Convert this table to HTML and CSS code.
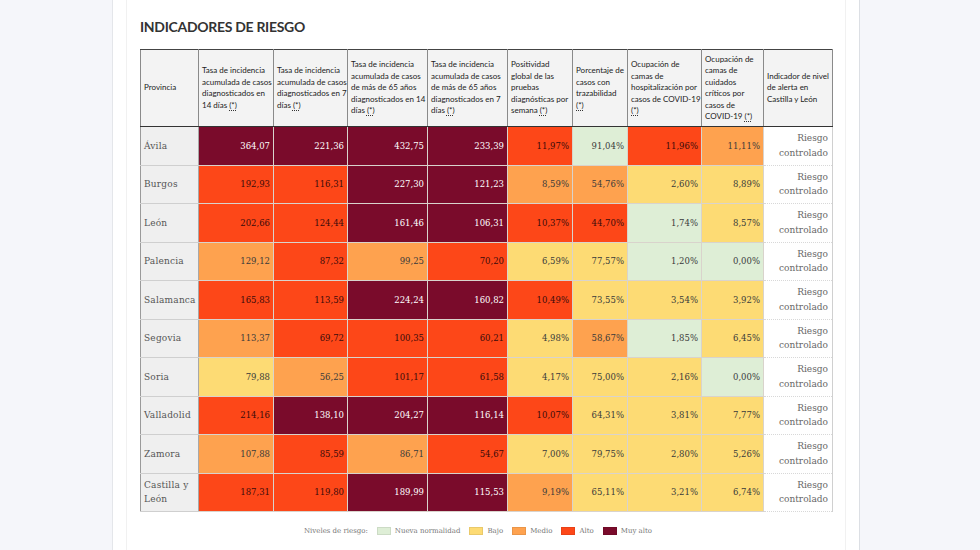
FILE: index.html
```html
<!DOCTYPE html>
<html lang="es">
<head>
<meta charset="utf-8">
<title>Indicadores de riesgo</title>
<link rel="stylesheet" href="styles.css">
</head>
<body>
<div class="page">
  <div class="inner">
    <h2 class="title">INDICADORES DE RIESGO</h2>
    <table class="risk">
      <thead>
        <tr>
          <th class="c1">Provincia</th>
          <th class="c2">Tasa de incidencia<br>acumulada de casos<br>diagnosticados en<br>14 días <abbr>(*)</abbr></th>
          <th class="c3">Tasa de incidencia<br>acumulada de casos<br>diagnosticados en 7<br>días <abbr>(*)</abbr></th>
          <th class="c4">Tasa de incidencia<br>acumulada de casos<br>de más de 65 años<br>diagnosticados en 14<br>días <abbr>(*)</abbr></th>
          <th class="c5">Tasa de incidencia<br>acumulada de casos<br>de más de 65 años<br>diagnosticados en 7<br>días <abbr>(*)</abbr></th>
          <th class="c6">Positividad<br>global de las<br>pruebas<br>diagnósticas por<br>semana <abbr>(*)</abbr></th>
          <th class="c7">Porcentaje de<br>casos con<br>trazabilidad<br><abbr>(*)</abbr></th>
          <th class="c8">Ocupación de<br>camas de<br>hospitalización por<br>casos de COVID-19<br><abbr>(*)</abbr></th>
          <th class="c9">Ocupación de<br>camas de<br>cuidados<br>críticos por<br>casos de<br>COVID-19 <abbr>(*)</abbr></th>
          <th class="c10">Indicador de nivel<br>de alerta en<br>Castilla y León</th>
        </tr>
      </thead>
      <tbody>
        <tr><td class="prov">Ávila</td><td class="m">364,07</td><td class="m">221,36</td><td class="m">432,75</td><td class="m">233,39</td><td class="a">11,97%</td><td class="n">91,04%</td><td class="a">11,96%</td><td class="me">11,11%</td><td class="lvl">Riesgo<br>controlado</td></tr>
        <tr><td class="prov">Burgos</td><td class="a">192,93</td><td class="a">116,31</td><td class="m">227,30</td><td class="m">121,23</td><td class="me">8,59%</td><td class="me">54,76%</td><td class="b">2,60%</td><td class="b">8,89%</td><td class="lvl">Riesgo<br>controlado</td></tr>
        <tr><td class="prov">León</td><td class="a">202,66</td><td class="a">124,44</td><td class="m">161,46</td><td class="m">106,31</td><td class="a">10,37%</td><td class="a">44,70%</td><td class="n">1,74%</td><td class="b">8,57%</td><td class="lvl">Riesgo<br>controlado</td></tr>
        <tr><td class="prov">Palencia</td><td class="me">129,12</td><td class="a">87,32</td><td class="me">99,25</td><td class="a">70,20</td><td class="b">6,59%</td><td class="b">77,57%</td><td class="n">1,20%</td><td class="n">0,00%</td><td class="lvl">Riesgo<br>controlado</td></tr>
        <tr><td class="prov">Salamanca</td><td class="a">165,83</td><td class="a">113,59</td><td class="m">224,24</td><td class="m">160,82</td><td class="a">10,49%</td><td class="b">73,55%</td><td class="b">3,54%</td><td class="b">3,92%</td><td class="lvl">Riesgo<br>controlado</td></tr>
        <tr><td class="prov">Segovia</td><td class="me">113,37</td><td class="a">69,72</td><td class="a">100,35</td><td class="a">60,21</td><td class="b">4,98%</td><td class="me">58,67%</td><td class="n">1,85%</td><td class="b">6,45%</td><td class="lvl">Riesgo<br>controlado</td></tr>
        <tr><td class="prov">Soria</td><td class="b">79,88</td><td class="me">56,25</td><td class="a">101,17</td><td class="a">61,58</td><td class="b">4,17%</td><td class="b">75,00%</td><td class="b">2,16%</td><td class="n">0,00%</td><td class="lvl">Riesgo<br>controlado</td></tr>
        <tr><td class="prov">Valladolid</td><td class="a">214,16</td><td class="m">138,10</td><td class="m">204,27</td><td class="m">116,14</td><td class="a">10,07%</td><td class="b">64,31%</td><td class="b">3,81%</td><td class="b">7,77%</td><td class="lvl">Riesgo<br>controlado</td></tr>
        <tr><td class="prov">Zamora</td><td class="me">107,88</td><td class="a">85,59</td><td class="me">86,71</td><td class="a">54,67</td><td class="b">7,00%</td><td class="b">79,75%</td><td class="b">2,80%</td><td class="b">5,26%</td><td class="lvl">Riesgo<br>controlado</td></tr>
        <tr><td class="prov">Castilla y<br>León</td><td class="a">187,31</td><td class="a">119,80</td><td class="m">189,99</td><td class="m">115,53</td><td class="me">9,19%</td><td class="b">65,11%</td><td class="b">3,21%</td><td class="b">6,74%</td><td class="lvl">Riesgo<br>controlado</td></tr>
      </tbody>
    </table>
    <div class="legend">
      <span class="legend-label">Niveles de riesgo:</span>
      <span class="item"><i class="sw n"></i>Nueva normalidad</span>
      <span class="item"><i class="sw b"></i>Bajo</span>
      <span class="item"><i class="sw me"></i>Medio</span>
      <span class="item"><i class="sw a"></i>Alto</span>
      <span class="item"><i class="sw m"></i>Muy alto</span>
    </div>
  </div>
</div>
</body>
</html>
```

FILE: styles.css
```css
html, body {
  margin: 0;
  padding: 0;
}
body {
  background: #f5f6fa;
  width: 980px;
  height: 550px;
  overflow: hidden;
}
.page {
  margin-left: 112px;
  width: 720px;
  height: 550px;
  background: #ffffff;
  border-left: 1px solid #e4e6ea;
  border-right: 1px solid #dcdfe4;
  padding: 0 13px;
}
.inner {
  height: 550px;
  border-left: 1px solid #f1f1f1;
  border-right: 1px solid #f1f1f1;
  padding: 0 13px;
}
.title {
  margin: 0;
  padding-top: 19px;
  height: 30px;
  font-family: Lato, "Liberation Sans", sans-serif;
  font-weight: 700;
  font-size: 14px;
  line-height: 16px;
  color: #333333;
  letter-spacing: -0.3px;
}
.risk {
  border-collapse: collapse;
  table-layout: fixed;
  width: 692px;
}
.risk th {
  background: #f3f3f3;
  font-family: Lato, "Liberation Sans", sans-serif;
  font-weight: 400;
  font-size: 8px;
  line-height: 11.5px;
  color: #222222;
  text-align: left;
  vertical-align: middle;
  padding: 0 1px 0 3px;
  height: 76px;
  border: 1px solid #8a8a8a;
  border-top: 1px solid #444444;
  border-bottom: 1px solid #333333;
  white-space: nowrap;
  overflow: hidden;
}
.risk abbr {
  text-decoration: underline dotted #333;
  text-underline-offset: 2px;
}
.c1 { width: 53px; }
.c2 { width: 70px; }
.c3 { width: 69px; }
.c4 { width: 75px; }
.c5 { width: 75px; }
.c6 { width: 60px; }
.c7 { width: 50px; }
.c8 { width: 69px; }
.c9 { width: 57px; }
.c10 { width: 64px; }
.risk td {
  font-family: "DejaVu Serif", "Liberation Serif", serif;
  font-size: 8.5px;
  line-height: 14.5px;
  height: 37.5px;
  padding: 0 3px 0 3px;
  text-align: right;
  vertical-align: middle;
  color: #3a3a3a;
  border: 1px solid #d9d3cc;
}
.risk td.prov {
  text-align: left;
  background: #efefef;
  color: #555555;
  font-size: 9px;
  letter-spacing: 0.2px;
  border-left: 1px solid #9a9a9a;
  border-right: 1px solid #a8a8a8;
  border-top: 1px solid #cfcfcf;
  border-bottom: 1px solid #cfcfcf;
}
.risk td.lvl {
  background: #ffffff;
  color: #666666;
  font-size: 9px;
  padding-right: 4px;
  border-top: 1px dotted #d8d8d8;
  border-bottom: 1px dotted #d8d8d8;
  border-right: 1px solid #d0d0d0;
}
.m { background: #7a0b2b; }
.a { background: #fd4718; }
.me { background: #fea24f; }
.b { background: #fddb74; }
.n { background: #deeed6; }
.risk td.m { color: #ffffff; }
.risk td.a { color: #3a0b0b; }
.legend {
  display: flex;
  align-items: center;
  justify-content: center;
  gap: 9px;
  margin-top: 15px;
  padding-right: 16px;
  font-family: "DejaVu Serif", "Liberation Serif", serif;
  font-size: 7px;
  color: #777777;
}
.legend .item {
  display: flex;
  align-items: center;
  gap: 4px;
}
.sw {
  display: inline-block;
  width: 12px;
  height: 6px;
  border: 1px solid rgba(0,0,0,0.08);
}
```
